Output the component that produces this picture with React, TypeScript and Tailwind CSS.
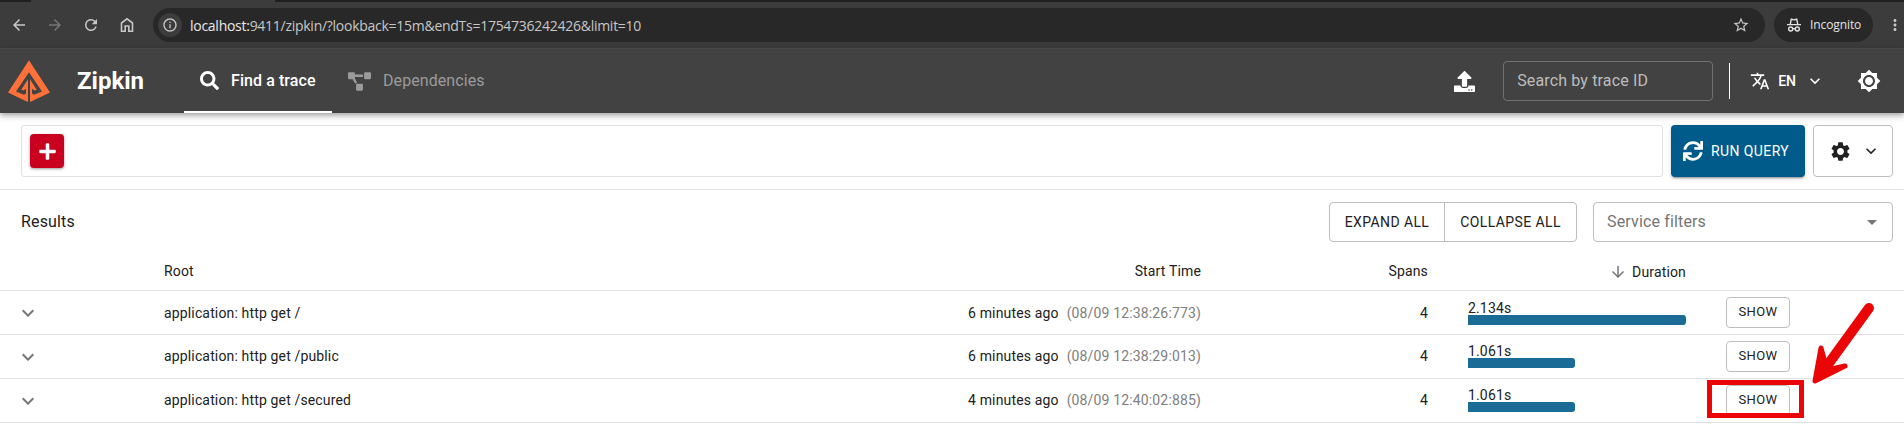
import React from "react";
import { FaSearch, FaProjectDiagram, FaUpload, FaSync, FaPlus } from "react-icons/fa";
import {
  MdArrowBack, MdArrowForward, MdRefresh, MdInfoOutline, MdStarBorder, MdMoreVert,
  MdTranslate, MdKeyboardArrowDown, MdBrightness7, MdSettings, MdArrowDropDown, MdArrowDownward,
} from "react-icons/md";

const rows = [
  { root: "application: http get /", ago: "6 minutes ago", at: "(08/09 12:38:26:773)", spans: 4, duration: "2.134s", width: 218, nudge: "pt-px" },
  { root: "application: http get /public", ago: "6 minutes ago", at: "(08/09 12:38:29:013)", spans: 4, duration: "1.061s", width: 107, nudge: "pb-px" },
  { root: "application: http get /secured", ago: "4 minutes ago", at: "(08/09 12:40:02:885)", spans: 4, duration: "1.061s", width: 107, nudge: "pb-px" },
];

function Incognito() {
  return (
    <svg viewBox="0 0 14 14" className="size-[14px]" fill="none" stroke="#e3e3e3" strokeWidth="1.4">
      <path d="M3.3 6.2 4.3 1.2 7 1.9 9.7 1.2 10.7 6.2M0 6.6h14" />
      <circle cx="3.7" cy="11" r="2" />
      <circle cx="10.3" cy="11" r="2" />
      <path d="M5.7 10.7h2.6" />
    </svg>
  );
}

function Home() {
  return (
    <svg viewBox="0 0 18 18" className="size-[18px]" fill="none" stroke="currentColor" strokeWidth="1.6">
      <path d="M3.5 15.200V7L9 2.800 14.500 7v8.200h-3.700V10H7.200v5.200Z" />
    </svg>
  );
}

function BrowserBar() {
  return (
    <div className="flex h-12 flex-col bg-[#3c3c3c]">
      <div className="flex h-0.5 shrink-0 bg-[#202020]">
        <span className="ml-[31px] w-[244px] bg-[#3c3c3c]" />
      </div>
      <div className="flex h-[46px] items-center text-[#c7c7c7]">
        <div className="ml-[10px] flex items-center gap-[18px]">
          <MdArrowBack className="size-[18px]" />
          <MdArrowForward className="size-[18px] text-[#757575]" />
          <MdRefresh className="size-[18px]" />
          <Home />
        </div>
        <div className="ml-[17px] flex h-[34px] w-[1612px] items-center rounded-full bg-[#282828] pr-[15px] pl-[5px]">
          <span className="flex size-6 items-center justify-center rounded-full bg-[#3c3c3c]">
            <MdInfoOutline className="size-4" />
          </span>
          <span className="ml-2 flex-1 font-['Open_Sans',sans-serif] text-[14px] tracking-[-0.27px]">
            <span className="text-[#e8e8e8]">localhost:</span>9411/zipkin/?lookback=15m&amp;endTs=1754736242426&amp;limit=10
          </span>
          <MdStarBorder className="size-[18px]" />
        </div>
        <div className="ml-[9px] flex h-[34px] w-[99px] items-center rounded-full bg-[#282828] pl-[13px] text-[#e3e3e3]">
          <Incognito />
          <span className="ml-[9px] font-['Open_Sans',sans-serif] text-[12px] tracking-[-0.1px]">Incognito</span>
        </div>
        <MdMoreVert className="ml-[13px] size-[18px] shrink-0" />
      </div>
    </div>
  );
}

function Logo() {
  return (
    <svg viewBox="24 15 126 125" className="size-[42px]">
      <path fill="#ff7139" d="M87 15 150 112 92 140H82L24 112Z" />
      <path fill="#424242" d="M87 51 48 109 72 119 78 115V101L70 106 64 104 84 72V141H90V72L110 104 104 106 96 101V115L102 119 126 109Z" />
    </svg>
  );
}

function AppHeader() {
  return (
    <header className="relative z-10 flex h-[65px] items-center border-t border-[#484848] bg-[#424242] text-white shadow-[0px_2px_4px_-1px_rgba(0,0,0,0.2),0px_4px_5px_0px_rgba(0,0,0,0.14),0px_1px_10px_0px_rgba(0,0,0,0.12)]">
      <div className="ml-2"><Logo /></div>
      <h1 className="ml-[27px] w-[107px] text-[24px] font-bold">Zipkin</h1>
      <nav className="flex h-full">
        <a className="flex h-full w-[148px] items-center border-b-2 border-white pt-px pl-4">
          <FaSearch className="size-[19px]" />
          <span className="ml-3 text-[16px] font-medium tracking-[0.08px]">Find a trace</span>
        </a>
        <a className="flex h-full items-center pl-4 text-[#9b9b9b]">
          <FaProjectDiagram className="h-[19px] w-[23px]" />
          <span className="ml-3 text-[16px] tracking-[0.08px]">Dependencies</span>
        </a>
      </nav>
      <div className="ml-auto flex items-center">
        <FaUpload className="size-[21px]" />
        <div className="ml-7 flex h-10 w-[210px] items-center rounded border border-[#717171] pl-[13px] text-[16px] tracking-[0.15px] text-[#bdbdbd]">Search by trace ID</div>
        <div className="ml-4 h-9 w-px bg-white" />
        <MdTranslate className="ml-5 size-[20px]" />
        <span className="ml-2 text-[14px] font-medium">EN</span>
        <MdKeyboardArrowDown className="ml-[9px] size-5" />
        <MdBrightness7 className="mr-[23px] ml-[32px] size-6" />
      </div>
    </header>
  );
}

function QueryBar() {
  return (
    <section className="flex h-[77px] border-b border-[#e0e0e0] pt-3 pr-[11px] pl-[21px]">
      <div className="flex h-[52px] flex-1 items-center rounded-[3px] border border-[#e0e0e0] pl-2">
        <button className="flex size-[34px] items-center justify-center rounded bg-[#c9001e] text-white shadow-[0_1px_3px_rgba(0,0,0,0.4)]">
          <FaPlus className="size-[19px]" />
        </button>
      </div>
      <button className="ml-2 flex h-[52px] w-[134px] items-center rounded bg-[#005b8a] pl-3 text-white shadow-[0px_3px_1px_-2px_rgba(0,0,0,0.2),0px_2px_2px_0px_rgba(0,0,0,0.14),0px_1px_5px_0px_rgba(0,0,0,0.12)]">
        <FaSync className="size-5" />
        <span className="ml-2 text-[14px] tracking-[0.4px]">RUN QUERY</span>
      </button>
      <button className="ml-2 flex h-[52px] w-20 items-center rounded border border-[#bebebe] pl-[15px] text-[#212121]">
        <MdSettings className="size-[23px]" />
        <MdKeyboardArrowDown className="ml-[9px] size-5" />
      </button>
    </section>
  );
}

function ResultsToolbar() {
  return (
    <div className="flex h-[64px] items-start pt-3 pr-[11px] pl-[21px]">
      <h2 className="flex h-10 items-center text-[16px] tracking-[0.15px]">Results</h2>
      <div className="ml-auto flex h-10 w-[248px] rounded border border-[#bebebe] text-[14px] tracking-[0.4px]">
        <button className="w-[115px] border-r border-[#bebebe]">EXPAND ALL</button>
        <button className="flex-1">COLLAPSE ALL</button>
      </div>
      <div className="ml-4 flex h-10 w-[300px] items-center justify-between rounded border border-[#bebebe] pr-2 pl-[13px] text-[16px] tracking-[0.15px] text-[#757575]">
        Service filters
        <MdArrowDropDown className="size-6" />
      </div>
    </div>
  );
}

const columns = "grid grid-cols-[164px_1037px_227px_258px_1fr]";

function ResultsTable() {
  return (
    <div className="text-[14px] tracking-[0.15px]">
      <div className={`${columns} h-[37px] border-b border-[#e0e0e0] leading-[35px]`}>
        <span />
        <div className="flex justify-between"><span>Root</span><span>Start Time</span></div>
        <span className="text-right">Spans</span>
        <span className="flex h-9 items-center justify-end"><MdArrowDownward className="mr-[5px] size-[18px] text-[#757575]" />Duration</span>
        <span />
      </div>
      {rows.map((r) => (
        <div key={r.root} className={`${columns} h-11 items-center border-b border-[#e0e0e0]`}>
          <MdKeyboardArrowDown className="mt-px ml-4 size-6 text-[#757575]" />
          <div className={`flex justify-between ${r.nudge}`}>
            <span>{r.root}</span>
            <span>{r.ago}<span className="ml-2 text-[#808080]">{r.at}</span></span>
          </div>
          <span className={`text-right ${r.nudge}`}>{r.spans}</span>
          <div className={`pl-10 ${r.nudge}`}>
            <div className="h-[14px] leading-[14px]">{r.duration}</div>
            <div className="h-[10px] rounded-r-[3px] bg-[#1a6b96]" style={{ width: r.width }} />
          </div>
          <button className="ml-10 h-[31px] w-16 rounded border border-[#bebebe] pb-px text-[13px] tracking-[0.37px]">SHOW</button>
        </div>
      ))}
    </div>
  );
}

export default function App() {
  return (
    <div className="relative h-[429px] w-[1904px] overflow-hidden bg-white font-['Roboto',sans-serif] text-[#212121]">
      <BrowserBar />
      <AppHeader />
      <QueryBar />
      <ResultsToolbar />
      <ResultsTable />
      <div className="absolute top-[380px] left-[1707px] h-[38px] w-[97px] border-[5px] border-[#ea0606]" />
      <svg className="absolute top-[298px] left-[1808px]" width="72" height="90" viewBox="1808 298 72 90" fill="none" stroke="#ea0606" strokeLinecap="round" strokeLinejoin="round">
        <path strokeWidth="10" d="M1869 308 1824 370" />
        <path strokeWidth="5" fill="#ea0606" d="M1821 348 1815 381 1845 366 1827 370Z" />
      </svg>
    </div>
  );
}
